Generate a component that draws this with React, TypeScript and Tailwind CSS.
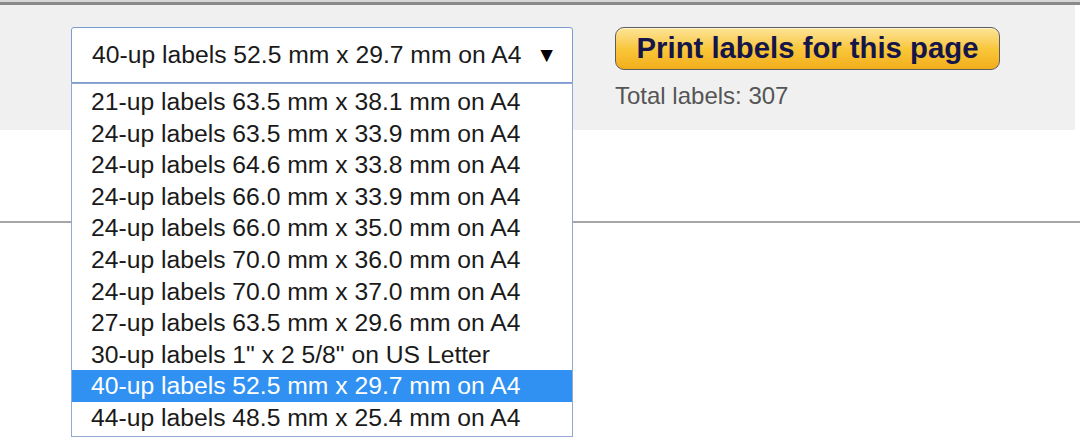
import { useState } from 'react';

const OPTIONS = [
  '21-up labels 63.5 mm x 38.1 mm on A4',
  '24-up labels 63.5 mm x 33.9 mm on A4',
  '24-up labels 64.6 mm x 33.8 mm on A4',
  '24-up labels 66.0 mm x 33.9 mm on A4',
  '24-up labels 66.0 mm x 35.0 mm on A4',
  '24-up labels 70.0 mm x 36.0 mm on A4',
  '24-up labels 70.0 mm x 37.0 mm on A4',
  '27-up labels 63.5 mm x 29.6 mm on A4',
  '30-up labels 1" x 2 5/8" on US Letter',
  '40-up labels 52.5 mm x 29.7 mm on A4',
  '44-up labels 48.5 mm x 25.4 mm on A4',
];

export default function App() {
  const [selected, setSelected] = useState(9);

  return (
    <div className="relative w-[1080px] h-[441px] overflow-hidden bg-white font-['Liberation_Sans',Arial,sans-serif]">
      <div className="h-[2px] bg-[#d6d6d6]" />
      <div className="h-[3px] bg-[#8a8a8a]" />

      <div className="flex h-[125px] w-[1075px] items-start bg-[#f0f0f0] pl-[71px] pt-[22px]">
        <div className="relative w-[502px]">
          <div className="flex h-[56px] items-center justify-between rounded-t-[3px] border border-[#7b9bd1] bg-white pl-[20px] pr-[15px] text-[24.7px] text-[#1a1a1a]">
            <span>{OPTIONS[selected]}</span>
            <span className="text-[21px] text-black">▼</span>
          </div>

          <ul className="absolute left-0 top-full z-10 w-[502px] border border-[#93a7d4] bg-white py-[2px]">
            {OPTIONS.map((opt, i) => (
              <li
                key={opt}
                onClick={() => setSelected(i)}
                className={
                  i === selected
                    ? 'h-[31.6px] bg-[#3091f2] pl-[19px] text-[24.7px] leading-[31.6px] text-white'
                    : 'h-[31.6px] pl-[19px] text-[24.7px] leading-[31.6px] text-[#1a1a1a]'
                }
              >
                {opt}
              </li>
            ))}
          </ul>
        </div>

        <div className="ml-[42px] flex flex-col">
          <button className="flex h-[43px] w-[385px] items-center justify-center rounded-[9px] border border-[#5e5e5e] bg-gradient-to-b from-[#fde494] via-[#f9c73a] to-[#f2ae19] pb-[2px] text-[29.3px] font-bold text-[#15154a] shadow-[inset_0_1px_0_rgba(255,255,255,0.6)]">
            Print labels for this page
          </button>
          <p className="mt-[12px] text-[24px] leading-[28px] text-[#555]">Total labels: {307}</p>
        </div>
      </div>

      <div className="mt-[91px] h-[2px] bg-[#a6a6a6]" />
    </div>
  );
}
